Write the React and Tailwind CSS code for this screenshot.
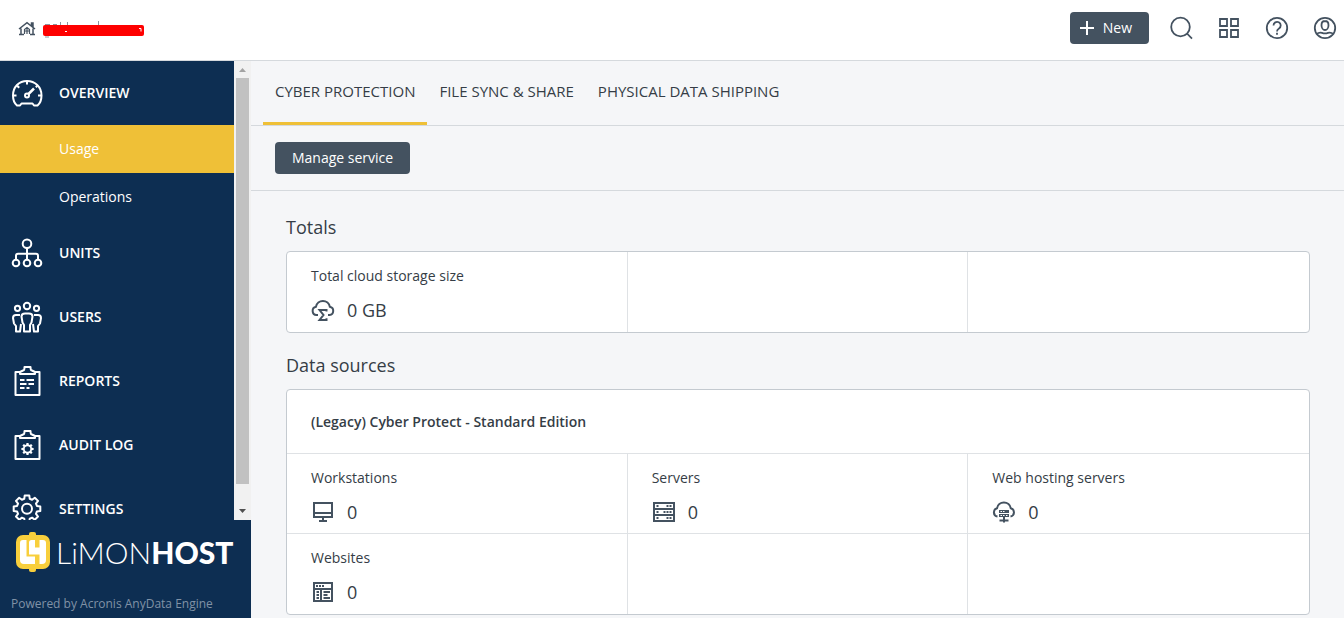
const gear = (cx, cy, outer, inner) => {
  const pts = [];
  for (let i = 0; i < 8; i++) {
    const mid = (i * Math.PI) / 4 - Math.PI / 2;
    [[-0.27, inner], [-0.17, outer], [0.17, outer], [0.27, inner]].forEach(([da, r]) => {
      pts.push(`${(cx + r * Math.cos(mid + da)).toFixed(2)} ${(cy + r * Math.sin(mid + da)).toFixed(2)}`);
    });
  }
  return `M${pts.join('L')}Z`;
};

function NavIcon({ children }) {
  return (
    <svg viewBox="0 0 32 32" className="size-8 shrink-0" fill="none" stroke="currentColor" strokeWidth="2" strokeLinejoin="round" aria-hidden="true">
      {children}
    </svg>
  );
}

function SmallIcon({ children }) {
  return (
    <svg viewBox="0 0 24 24" className="size-6 shrink-0 text-[#445260]" fill="none" stroke="currentColor" strokeWidth="1.8" aria-hidden="true">
      {children}
    </svg>
  );
}

const clipboard = (
  <>
    <path d="M9 7H4.5v23h24V7H24" />
    <path d="M9 9V7l3-1.5c1 0 1.5-1 1.5-3.5h6c0 2.5.5 3.5 1.5 3.5L24 7v2z" />
  </>
);

const icons = {
  overview: (
    <NavIcon>
      <path d="M6 28.5C3 26 2 22 2 18.5 2 10 8 4 16 4s14.5 6 14.5 14.5C30.5 22 29.5 26 26.5 28.5H23l-1.5-2h-11l-1.5 2z" />
      <path d="M2 18.5h3.5M27 18.5h3.5M16 4v3.5M6.2 8.7l2 2M26.3 8.7l-1.5 1.5" />
      <circle cx="16" cy="18.5" r="2" />
      <path d="m17.5 17 5.5-5.5" strokeWidth="2.5" />
    </NavIcon>
  ),
  units: (
    <NavIcon>
      <circle cx="16" cy="6.7" r="4.3" />
      <circle cx="5" cy="26" r="3.3" />
      <circle cx="16" cy="26" r="3.3" />
      <circle cx="27" cy="26" r="3.3" />
      <path d="M16 11v11.7M5 22.7v-4q0-2 2-2h18q2 0 2 2v4" />
    </NavIcon>
  ),
  users: (
    <NavIcon>
      <circle cx="16" cy="5" r="3.2" />
      <circle cx="6.5" cy="7.3" r="2.6" />
      <circle cx="25.5" cy="7.3" r="2.6" />
      <path d="M14 12.5h4q3.5 0 3.5 3l-1 6-1.5 2.5v6.5h-6V24l-1.5-2.5-1-6q0-3 3.5-3z" />
      <path d="M9 14H5q-3 0-3 3l1 5.5L5 25v5.5h4l1-7.5M23 14h4q3 0 3 3l-1 5.5-2 2.5v5.5h-4L22 23" />
    </NavIcon>
  ),
  reports: (
    <NavIcon>
      {clipboard}
      <path d="M9 15h4.5M15.5 15H23M9 19h6.5M17.5 19H23M9 23h4.5M15.5 23h3" />
    </NavIcon>
  ),
  audit: (
    <NavIcon>
      {clipboard}
      <path d={gear(16.5, 20, 6.2, 4.6)} fill="currentColor" stroke="none" />
      <circle cx="16.5" cy="20" r="2.8" fill="#0d2e52" stroke="none" />
    </NavIcon>
  ),
  settings: (
    <NavIcon>
      <path d={gear(16, 15.7, 13.5, 10.3)} />
      <circle cx="16" cy="15.7" r="5" />
    </NavIcon>
  ),
  cloudSum: (
    <SmallIcon>
      <path d="M7 17H5.5A4.2 4.2 0 0 1 5 8.7a7 7 0 0 1 13.8 0A4.2 4.2 0 0 1 18.5 17H17" strokeWidth="2" />
      <path d="M15.5 13.5V12h-7l4 5-4 5h7v-1.7" strokeWidth="2" />
    </SmallIcon>
  ),
  workstation: (
    <SmallIcon>
      <path d="M3 3h18v14H3zM3 13h18M12 17v4M8 21h8" strokeWidth="2" />
    </SmallIcon>
  ),
  server: (
    <SmallIcon>
      <path d="M2 3h20v18H2zM2 9h20M2 15h20" strokeWidth="2" />
      <path d="M4.5 6h2M14.5 6h2M17.5 6h2M4.5 12h2M11.5 12h2M14.5 12h2M17.5 12h2M4.5 18h2M14.5 18h2M17.5 18h2" />
    </SmallIcon>
  ),
  hosting: (
    <SmallIcon>
      <path d="M5.5 16.5A4.2 4.2 0 0 1 5 8.3a7 7 0 0 1 13.8 0 4.2 4.2 0 0 1-.3 8.2" strokeWidth="2" />
      <path d="M7 10h10v3H7zM7 14h10v3H7z" fill="currentColor" stroke="none" />
      <path d="M8.5 11.5H10M11 11.5h1.5M8.5 15.5H10M11 15.5h1.5M14 15.5h1.5" stroke="#fff" strokeWidth="1" />
      <path d="M12 16.5v6M7.5 20.5h9" strokeWidth="2" />
    </SmallIcon>
  ),
  website: (
    <SmallIcon>
      <path d="M3 3h18v18H3zM3 9h18M10 9v12" strokeWidth="2" />
      <path d="M5 6h2M8 6h2M11 6h2M5.5 12H8M5.5 15H8M5.5 18H8M12.5 12H19M12.5 15h4M12.5 18H19" />
    </SmallIcon>
  ),
};

const navItems = [
  { label: 'OVERVIEW', icon: icons.overview, children: ['Usage', 'Operations'] },
  { label: 'UNITS', icon: icons.units },
  { label: 'USERS', icon: icons.users },
  { label: 'REPORTS', icon: icons.reports },
  { label: 'AUDIT LOG', icon: icons.audit },
  { label: 'SETTINGS', icon: icons.settings },
];

const tabs = ['CYBER PROTECTION', 'FILE SYNC & SHARE', 'PHYSICAL DATA SHIPPING'];

function Header() {
  return (
    <header className="flex h-[61px] shrink-0 items-start justify-between border-b border-[#d5d9dd] bg-white pt-3 pl-[18px] pr-[7px]">
      <a href="#" aria-label="Home" className="flex h-8 items-center gap-[7px] text-[#445260]">
        <svg viewBox="0 0 18 16" className="h-4 w-[18px]" fill="none" stroke="currentColor" strokeWidth="1.5" aria-hidden="true">
          <path d="M1 9 9 2.7 17 9M13.5 6V3H15v4M3 8.5v6M15 8.5v6M1 14.5h5M12 14.5h5" />
          <path d="M6.5 14V9.5L9 7.5l2.5 2V14M9 8v6M6.5 11h5" strokeWidth="1.2" />
        </svg>
        {/* account name, struck out */}
        <svg viewBox="0 0 101 20" className="h-5 w-[101px]" aria-hidden="true">
          <path d="M2 6.5h5M10 6.5h4M17.5 4v4M24.5 4v4M55.5 3v5M2 19h4" stroke="#8d969f" strokeWidth="1" />
          <path d="M2 7h97q2 0 2 2v7q0 2-2 2H2q-2 0-2-2V9q0-2 2-2z" fill="#fe0000" />
          <path d="M22 13.5h2M96 10.5h2v3" fill="none" stroke="#fff" strokeWidth="1" />
        </svg>
      </a>
      <div className="flex items-center">
        <button type="button" className="mr-5 flex h-8 items-center gap-2 rounded-sm bg-[#445260] pr-[17px] pl-[9px] text-sm text-white">
          <svg viewBox="0 0 16 16" className="size-4" stroke="currentColor" strokeWidth="2" aria-hidden="true">
            <path d="M1 8h14M8 1v14" />
          </svg>
          New
        </button>
        <div className="flex gap-6">
          <button type="button" aria-label="Search">
            <SmallIcon>
              <circle cx="11.5" cy="11" r="9.3" />
              <path d="m18 17.5 5 5.2" />
            </SmallIcon>
          </button>
          <button type="button" aria-label="Services">
            <SmallIcon>
              <path d="M3 3h7v7H3zM14 3h7v7h-7zM3 14h7v7H3zM14 14h7v7h-7z" />
            </SmallIcon>
          </button>
          <button type="button" aria-label="Help">
            <SmallIcon>
              <circle cx="12" cy="12" r="10.2" />
              <path d="M8.5 9.5a3.6 3.6 0 1 1 5.5 3c-1.3.8-2 1.3-2 3M12 16.8v2" />
            </SmallIcon>
          </button>
          <button type="button" aria-label="Account">
            <SmallIcon>
              <circle cx="12" cy="12" r="10.2" />
              <path d="M12 5c-2.3 0-3.5 1.8-3.5 4.2S10 14 12 14s3.5-2.4 3.5-4.8S14.3 5 12 5zM3.5 18c2-1.5 4-1.7 5.5-1.2 2 .8 4 .8 6 0 1.5-.5 3.5-.3 5.5 1.2" />
            </SmallIcon>
          </button>
        </div>
      </div>
    </header>
  );
}

function Sidebar() {
  return (
    <aside className="flex w-[251px] shrink-0 flex-col bg-[#0d2e52] text-white">
      <div className="flex min-h-0 flex-1">
        <nav className="min-w-0 flex-1 overflow-hidden text-sm">
          {navItems.map((item) => (
            <div key={item.label}>
              <a href="#" className="flex h-16 items-center gap-4 pl-[11px] font-semibold">
                {item.icon}
                {item.label}
              </a>
              {item.children?.map((child) => (
                <a
                  key={child}
                  href="#"
                  className={child === 'Usage' ? 'flex h-12 items-center bg-[#efc037] pl-[59px]' : 'flex h-12 items-center pl-[59px]'}
                >
                  {child}
                </a>
              ))}
            </div>
          ))}
        </nav>
        <div className="flex w-[17px] flex-col items-center bg-[#f1f1f1]">
          <svg viewBox="0 0 17 17" className="size-[17px] shrink-0" aria-hidden="true">
            <path d="M5 11h7L8.5 7z" fill="#a3a3a3" />
          </svg>
          <div className="w-[13px] flex-1 bg-[#c1c1c1]" />
          <div className="flex h-9 shrink-0 items-end">
            <svg viewBox="0 0 17 17" className="size-[17px]" aria-hidden="true">
              <path d="M5 6h7l-3.5 4z" fill="#505050" />
            </svg>
          </div>
        </div>
      </div>
      <div className="h-[98px] shrink-0 pt-3">
        <div className="flex h-10 items-center gap-1.5 pl-4">
          <svg viewBox="0 0 34 40" className="h-10 w-[34px]" aria-hidden="true">
            <rect x="0" y="3" width="34" height="34" rx="7" fill="#f8cf3c" />
            <rect x="13" y="0" width="7" height="40" rx="2" fill="#f8cf3c" />
            <path d="M7 8h3.5v16.5H19V32H8q-4 0-4-4V11q0-3 3-3z" fill="#fff" />
            <path d="M15.5 8H19v7.5h4.5V8H27q3 0 3 3v17q0 4-4 4h-2.5v-9.5H13v-12Q13 8 15.5 8z" fill="#fff" />
          </svg>
          <span className="font-['Lato'] text-3xl font-light">LiMON<span className="font-black">HOST</span></span>
        </div>
        <p className="pt-[22px] pl-[11px] text-xs leading-5 text-[#8092a6]">Powered by Acronis AnyData Engine</p>
      </div>
    </aside>
  );
}

function Metric({ label, icon, value }) {
  return (
    <div className="h-20 border-r border-[#dfe2e5] px-6 pt-3.5 last:border-r-0">
      {label && (
        <>
          <div className="text-sm leading-5">{label}</div>
          <div className="mt-3 flex items-center gap-3 text-lg leading-6">
            {icon}
            {value}
          </div>
        </>
      )}
    </div>
  );
}

export default function App() {
  return (
    <div className="flex h-screen flex-col overflow-hidden bg-[#f5f6f8] font-['Open_Sans',sans-serif] text-[#353d46]">
      <Header />
      <div className="flex min-h-0 flex-1">
        <Sidebar />
        <main className="min-w-0 flex-1 overflow-hidden">
          <div className="flex h-[65px] border-b border-[#d5d9dd] pl-3">
            {tabs.map((tab, i) => (
              <button
                key={tab}
                type="button"
                className={i === 0 ? 'border-b-3 border-[#efc037] px-3 text-[15px] font-medium' : 'border-b-3 border-transparent px-3 text-[15px] font-medium'}
              >
                {tab}
              </button>
            ))}
          </div>
          <div className="flex h-[65px] items-center border-b border-[#d5d9dd] pl-6">
            <button type="button" className="h-8 rounded-sm bg-[#445260] px-[17px] text-sm text-white">Manage service</button>
          </div>
          <div className="pt-6 pr-[34px] pl-[35px]">
            <h2 className="text-lg leading-6">Totals</h2>
            <section className="mt-3 grid grid-cols-3 rounded-sm border border-[#c4cad0] bg-white">
              <Metric label="Total cloud storage size" icon={icons.cloudSum} value="0 GB" />
              <Metric />
              <Metric />
            </section>
            <h2 className="mt-5 text-lg leading-6">Data sources</h2>
            <section className="mt-3 rounded-sm border border-[#c4cad0] bg-white">
              <h3 className="flex h-16 items-center border-b border-[#dfe2e5] px-6 text-sm font-semibold">(Legacy) Cyber Protect - Standard Edition</h3>
              <div className="grid h-20 grid-cols-3 overflow-hidden border-b border-[#dfe2e5]">
                <Metric label="Workstations" icon={icons.workstation} value="0" />
                <Metric label="Servers" icon={icons.server} value="0" />
                <Metric label="Web hosting servers" icon={icons.hosting} value="0" />
              </div>
              <div className="grid grid-cols-3">
                <Metric label="Websites" icon={icons.website} value="0" />
                <Metric />
                <Metric />
              </div>
            </section>
          </div>
        </main>
      </div>
    </div>
  );
}
